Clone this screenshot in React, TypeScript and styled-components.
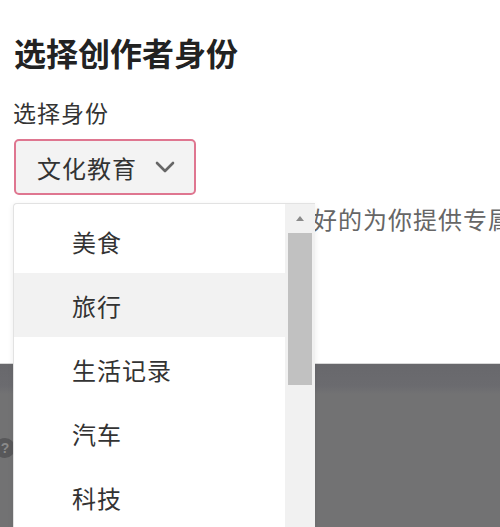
import React from "react";
import styled, { createGlobalStyle } from "styled-components";

const Global = createGlobalStyle`
  html, body { margin: 0; padding: 0; background: #fff; overflow: hidden; }
  body { font-family: "Noto Sans CJK SC", "Noto Sans", sans-serif; }
`;

const Page = styled.div`
  position: relative;
  width: 500px;
  height: 527px;
  overflow: hidden;
  display: flex;
  flex-direction: column;
`;

const Top = styled.div`
  height: 363px;
  padding: 0 13px;
  box-sizing: border-box;
  display: flex;
  flex-direction: column;
  align-items: flex-start;
`;

const Title = styled.h1`
  margin: 32px 0 0 1px;
  font-size: 32px;
  line-height: 40px;
  font-weight: 700;
  color: #222;
`;

const Label = styled.div`
  margin-top: 24px;
  font-size: 23px;
  line-height: 32px;
  color: #333;
  letter-spacing: 1px;
`;

const SelectBox = styled.div`
  margin-top: 11px;
  margin-left: 1px;
  width: 182px;
  height: 56px;
  box-sizing: border-box;
  border: 2px solid #df7690;
  border-radius: 5px;
  background: #f3f3f3;
  display: flex;
  align-items: center;
  padding-left: 21px;
  gap: 18px;
  font-size: 24px;
  letter-spacing: 1px;
  color: #333;
`;

const Hint = styled.div`
  margin-top: 8px;
  font-size: 24px;
  line-height: 32px;
  letter-spacing: 1px;
  color: #666;
  white-space: nowrap;
`;

const Dark = styled.div`
  flex: 1;
  border-top: 1px solid #d8d8d8;
  background: linear-gradient(#68686c 0, #6b6b6f 22px, #727273 30px, #727273 100%);
  padding-top: 74px;
`;

const Help = styled.div`
  margin-left: -5px;
  width: 20px;
  height: 20px;
  border-radius: 50%;
  background: #58585a;
  color: #8a8a8a;
  font-size: 14px;
  line-height: 20px;
  text-align: center;
  font-family: "Liberation Sans", sans-serif;
  font-weight: 700;
`;

const Dropdown = styled.div`
  position: absolute;
  left: 13px;
  top: 203px;
  width: 302px;
  height: 340px;
  box-sizing: border-box;
  background: #fff;
  border: 1px solid #e2e2e2;
  border-right: none;
  border-radius: 4px 0 0 0;
  box-shadow: 0 2px 6px rgba(0, 0, 0, 0.08);
  display: flex;
  overflow: hidden;
`;

const List = styled.div`
  flex: 1;
  padding-top: 5px;
  display: flex;
  flex-direction: column;
`;

const Item = styled.div<{ $hover?: boolean }>`
  height: 64px;
  flex: none;
  display: flex;
  align-items: center;
  padding-left: 58px;
  font-size: 24px;
  color: #333;
  letter-spacing: 1px;
  background: ${(p) => (p.$hover ? "#f2f2f2" : "transparent")};
`;

const Track = styled.div`
  width: 30px;
  background: #f1f1f1;
  display: flex;
  flex-direction: column;
  align-items: center;
`;

const ArrowBtn = styled.div`
  height: 29px;
  width: 100%;
  display: flex;
  align-items: center;
  justify-content: center;
`;

const UpTri = styled.div`
  width: 0;
  height: 0;
  border-left: 4px solid transparent;
  border-right: 4px solid transparent;
  border-bottom: 5px solid #8a8a8a;
`;

const Thumb = styled.div`
  width: 24px;
  height: 152px;
  background: #c1c1c1;
`;

const Chevron = () => (
  <svg width="20" height="13" viewBox="0 0 20 13">
    <polyline points="2,2 10,10 18,2" fill="none" stroke="#666" strokeWidth="2.6" strokeLinecap="round" strokeLinejoin="round" />
  </svg>
);

const items = ["美食", "旅行", "生活记录", "汽车", "科技"];

export default function App() {
  return (
    <>
      <Global />
      <Page>
        <Top>
          <Title>选择创作者身份</Title>
          <Label>选择身份</Label>
          <SelectBox>
            <span>文化教育</span>
            <Chevron />
          </SelectBox>
          <Hint>选择身份后，平台将能够更好的为你提供专属内容</Hint>
        </Top>
        <Dark>
          <Help>?</Help>
        </Dark>
        <Dropdown>
          <List>
            {items.map((t, i) => (
              <Item key={t} $hover={i === 1}>
                {t}
              </Item>
            ))}
          </List>
          <Track>
            <ArrowBtn>
              <UpTri />
            </ArrowBtn>
            <Thumb />
          </Track>
        </Dropdown>
      </Page>
    </>
  );
}
